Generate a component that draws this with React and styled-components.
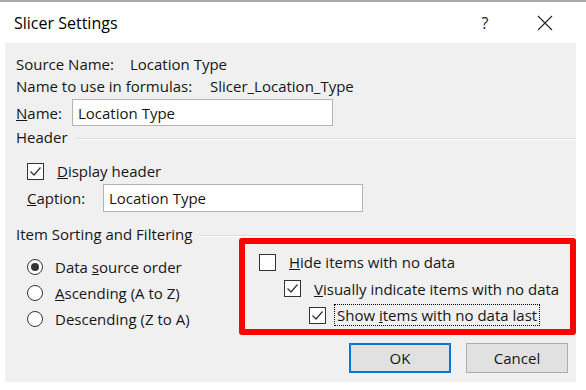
import React from 'react';
import styled, { createGlobalStyle } from 'styled-components';

const GlobalStyle = createGlobalStyle`
  html, body {
    margin: 0;
    padding: 0;
    background: #ffffff;
  }
  body {
    font-family: "Open Sans", "Noto Sans", sans-serif;
    color: #161616;
  }
`;

const Checkbox = ({ checked }) => (
  <Box>
    {checked && (
      <svg width="13" height="13" viewBox="0 0 13 13">
        <path d="M1.5 6.5 L5 10 L11.5 2.5" fill="none" stroke="#333" strokeWidth="1.2" />
      </svg>
    )}
  </Box>
);

const App = () => {
  return (
    <>
      <GlobalStyle />
      <Page>
        <BackEdge />
        <Dialog>
          <TitleBar>
            <Title>Slicer Settings</Title>
            <TitleButtons>
              <HelpButton>?</HelpButton>
              <CloseButton>
                <svg width="16" height="16" viewBox="0 0 16 16">
                  <path d="M1 1 L15 15 M15 1 L1 15" stroke="#222" strokeWidth="1.1" />
                </svg>
              </CloseButton>
            </TitleButtons>
          </TitleBar>

          <Body>
            <InfoRow>
              <InfoLabel width={114}>Source Name:</InfoLabel>
              <span>Location Type</span>
            </InfoRow>
            <InfoRow>
              <InfoLabel width={194}>Name to use in formulas:</InfoLabel>
              <span>Slicer_Location_Type</span>
            </InfoRow>

            <FieldRow top={2}>
              <FieldLabel width={56}><u>N</u>ame:</FieldLabel>
              <TextInput width={261}>Location Type</TextInput>
            </FieldRow>

            <GroupHeading top={1}>
              <span>Header</span>
              <Rule />
            </GroupHeading>

            <CheckRow top={13} indent={11}>
              <Checkbox checked />
              <CheckText gap={10}><u>D</u>isplay header</CheckText>
            </CheckRow>

            <FieldRow top={2} indent={11}>
              <FieldLabel width={76}><u>C</u>aption:</FieldLabel>
              <TextInput width={260} tall>Location Type</TextInput>
            </FieldRow>

            <GroupHeading top={12}>
              <span>Item Sorting and Filtering</span>
              <Rule />
            </GroupHeading>

            <Options>
              <RadioColumn>
                <RadioRow>
                  <Radio selected />
                  <span>Data <u>s</u>ource order</span>
                </RadioRow>
                <RadioRow>
                  <Radio />
                  <span><u>A</u>scending (A to Z)</span>
                </RadioRow>
                <RadioRow>
                  <Radio />
                  <span>Descendin<u>g</u> (Z to A)</span>
                </RadioRow>
              </RadioColumn>

              <Highlight>
                <CheckRow indent={0} tight>
                  <Checkbox />
                  <CheckText gap={10}><u>H</u>ide items with no data</CheckText>
                </CheckRow>
                <CheckRow indent={25} tight>
                  <Checkbox checked />
                  <CheckText gap={10}><u>V</u>isually indicate items with no data</CheckText>
                </CheckRow>
                <CheckRow indent={50} tight>
                  <Checkbox checked />
                  <CheckText gap={8} focused>Show <u>i</u>tems with no data last</CheckText>
                </CheckRow>
              </Highlight>
            </Options>

            <ButtonBar>
              <Button primary>OK</Button>
              <Button>Cancel</Button>
            </ButtonBar>
          </Body>
        </Dialog>
      </Page>
    </>
  );
};

const Page = styled.div`
  width: 586px;
  height: 390px;
  overflow: hidden;
  background: #ffffff;
`;

const BackEdge = styled.div`
  height: 2px;
  background: #a9a9a9;
`;

const Dialog = styled.div`
  margin-left: 5px;
  width: 571px;
`;

const TitleBar = styled.div`
  height: 41px;
  background: #ffffff;
  display: flex;
  align-items: center;
  padding-left: 9px;
`;

const Title = styled.div`
  font-size: 16px;
  color: #000;
  flex: 1;
`;

const TitleButtons = styled.div`
  display: flex;
  align-items: center;
`;

const HelpButton = styled.div`
  width: 60px;
  text-align: center;
  font-size: 16px;
  color: #222;
`;

const CloseButton = styled.div`
  width: 60px;
  display: flex;
  justify-content: center;
  margin-right: 1px;
`;

const Body = styled.div`
  height: 339px;
  box-sizing: border-box;
  background: #f0f0f0;
  padding: 10px 0 0 11px;
  font-size: 15px;
  line-height: 20px;
`;

const InfoRow = styled.div`
  height: 22px;
  display: flex;
  align-items: center;
`;

const InfoLabel = styled.span`
  width: ${p => p.width}px;
  flex: none;
`;

const FieldRow = styled.div`
  display: flex;
  align-items: center;
  margin-top: ${p => p.top || 0}px;
  padding-left: ${p => p.indent || 0}px;
`;

const FieldLabel = styled.span`
  width: ${p => p.width}px;
  flex: none;
`;

const TextInput = styled.div`
  width: ${p => p.width}px;
  height: ${p => (p.tall ? 28 : 27)}px;
  box-sizing: border-box;
  border: 1px solid #b4b4b4;
  background: #ffffff;
  display: flex;
  align-items: center;
  padding-left: 5px;
`;

const GroupHeading = styled.div`
  height: 20px;
  display: flex;
  align-items: center;
  margin-top: ${p => p.top || 0}px;
`;

const Rule = styled.div`
  flex: 1;
  height: 0;
  border-top: 1px solid #dcdcdc;
  border-bottom: 1px solid #ffffff;
  margin-left: 7px;
  margin-top: 3px;
`;

const CheckRow = styled.div`
  height: ${p => (p.tight ? 26.5 : 22)}px;
  display: flex;
  align-items: center;
  margin-top: ${p => p.top || 0}px;
  padding-left: ${p => p.indent}px;
`;

const Box = styled.div`
  width: 17px;
  height: 17px;
  box-sizing: border-box;
  border: 1px solid #333333;
  background: #ffffff;
  display: flex;
  align-items: center;
  justify-content: center;
  flex: none;
`;

const CheckText = styled.span`
  margin-left: ${p => p.gap}px;
  padding: 0 2px;
  border: 1px ${p => (p.focused ? 'dotted #000' : 'solid transparent')};
`;

const Options = styled.div`
  display: flex;
  margin-top: -6px;
`;

const RadioColumn = styled.div`
  padding: 16px 0 0 11px;
  flex: 1;
`;

const RadioRow = styled.div`
  height: 26px;
  display: flex;
  align-items: center;
  gap: 12px;
`;

const Radio = styled.div`
  width: 16px;
  height: 16px;
  box-sizing: border-box;
  border-radius: 50%;
  border: 1px solid #333333;
  background: #ffffff;
  position: relative;
  flex: none;

  &::after {
    content: '';
    display: ${p => (p.selected ? 'block' : 'none')};
    position: absolute;
    left: 3px;
    top: 3px;
    width: 8px;
    height: 8px;
    border-radius: 50%;
    background: #333333;
  }
`;

const Highlight = styled.div`
  width: 337px;
  height: 97px;
  box-sizing: border-box;
  border: 6px solid #ff0000;
  border-radius: 3px;
  padding: 5px 0 0 14px;
`;

const ButtonBar = styled.div`
  display: flex;
  justify-content: flex-end;
  gap: 15px;
  margin-top: 8px;
  padding-right: 8px;
`;

const Button = styled.div`
  width: 102px;
  height: 30px;
  box-sizing: border-box;
  background: #e1e1e1;
  border: ${p => (p.primary ? '2px solid #0078d7' : '1px solid #adadad')};
  display: flex;
  align-items: center;
  justify-content: center;
  color: #161616;
`;

export default App;
